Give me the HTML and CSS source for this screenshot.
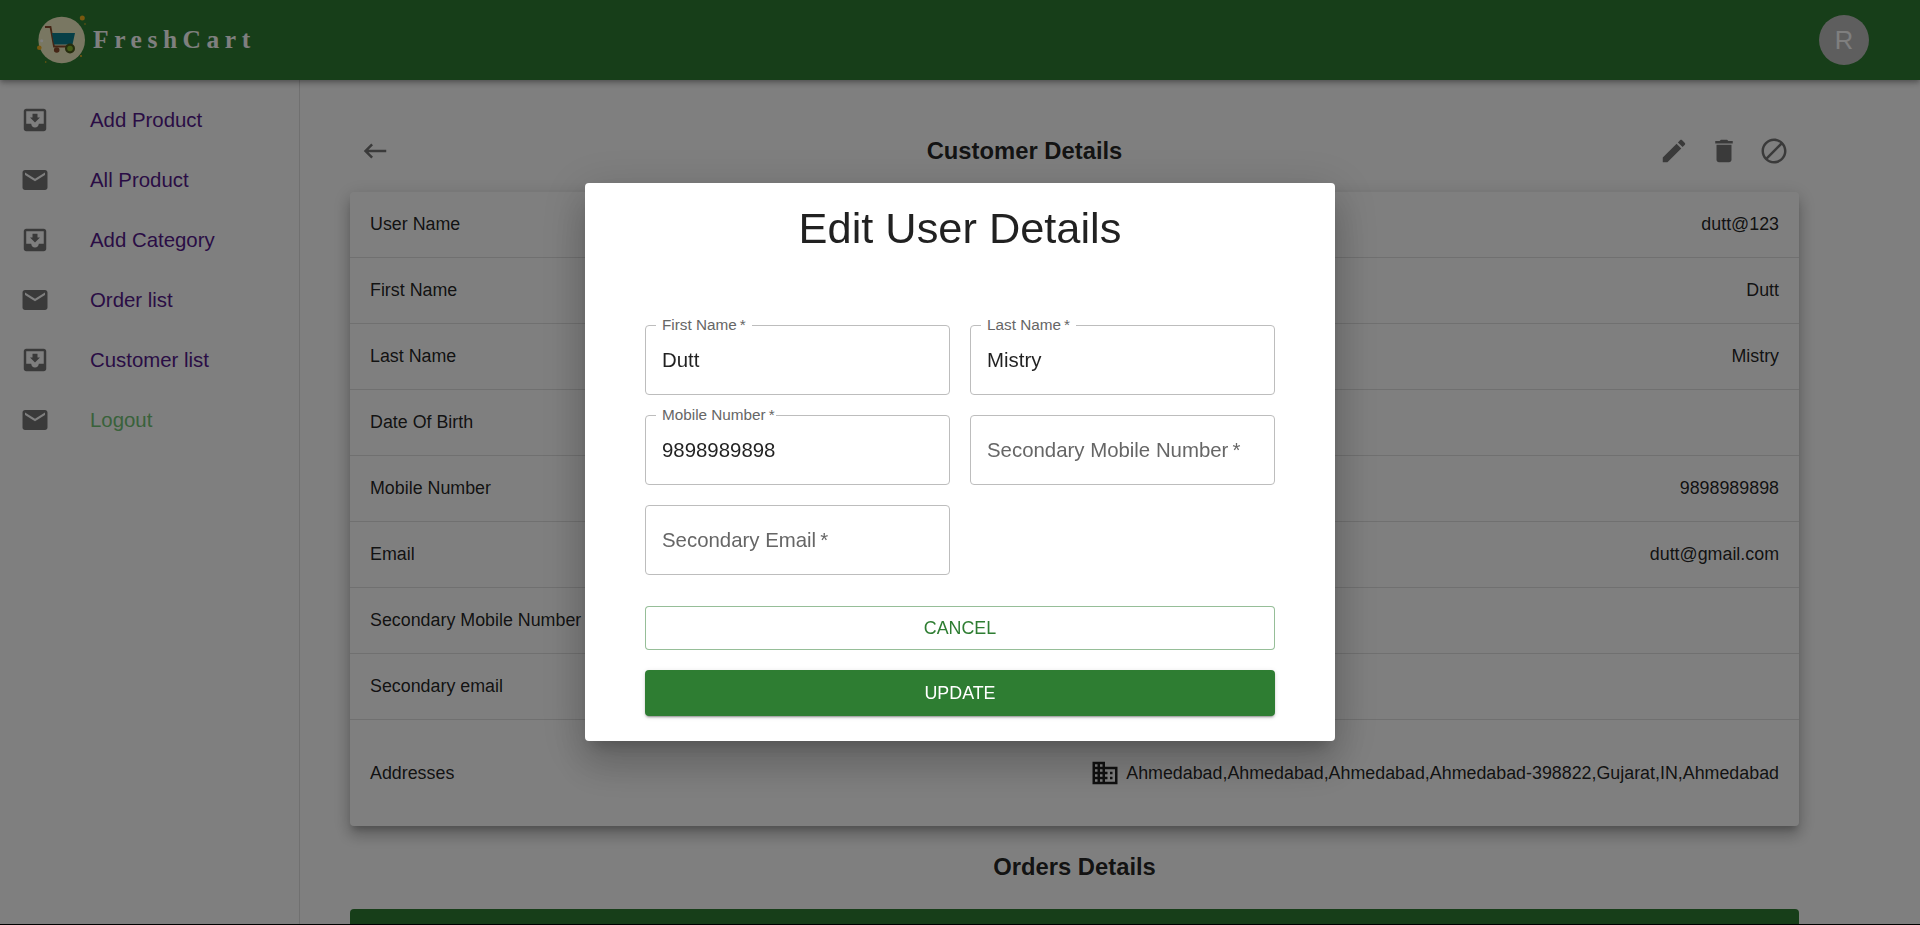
FILE: index.html
```html
<!DOCTYPE html>
<html>
<head>
    <title>FreshCart - Customer Details</title>
    <link rel="stylesheet" href="styles.css">
</head>
<body>
    <header class="topbar">
        <div class="brand">
            <svg class="brand-logo" width="50" height="50" viewBox="0 0 50 50">
                <circle cx="24.7" cy="25" r="23.3" fill="#f3efc4"/>
                <circle cx="45.3" cy="3" r="2.5" fill="#f2b01e"/>
                <circle cx="2.3" cy="32.7" r="2.3" fill="#f2b01e"/>
                <circle cx="4.7" cy="25.7" r="1.5" fill="#fff"/>
                <circle cx="44" cy="41" r="1" fill="#f2b01e"/>
                <circle cx="48" cy="9" r="0.8" fill="#f2b01e"/>
                <circle cx="8.7" cy="47" r="0.8" fill="#f2b01e"/>
                <path d="M8 12h5.5l3.5 19.5h17" fill="none" stroke="#8a4b2a" stroke-width="1.8"/>
                <path d="M15 18h23l-2.5 11.5H17z" fill="#0f7f8f"/>
                <circle cx="19.7" cy="35" r="2.8" fill="#8a4b2a"/>
                <circle cx="33" cy="33.5" r="5" fill="#4b5a1c"/>
                <circle cx="33" cy="33.5" r="2.8" fill="#86b82c"/>
            </svg>
            <span class="brand-name">FreshCart</span>
        </div>
        <div class="avatar">R</div>
    </header>

    <div class="layout">
        <nav class="sidebar">
            <a class="nav-item" href="#">
                <svg class="icon" viewBox="0 0 24 24"><path d="M19 3H4.99c-1.11 0-1.98.9-1.98 2L3 19c0 1.1.88 2 1.99 2H19c1.1 0 2-.9 2-2V5c0-1.1-.9-2-2-2zm0 12h-4c0 1.66-1.35 3-3 3s-3-1.34-3-3H4.99V5H19v10zm-3-5h-2V7h-4v3H8l4 4 4-4z"/></svg>
                <span>Add Product</span>
            </a>
            <a class="nav-item" href="#">
                <svg class="icon" viewBox="0 0 24 24"><path d="M20 4H4c-1.1 0-1.99.9-1.99 2L2 18c0 1.1.9 2 2 2h16c1.1 0 2-.9 2-2V6c0-1.1-.9-2-2-2zm0 4l-8 5-8-5V6l8 5 8-5v2z"/></svg>
                <span>All Product</span>
            </a>
            <a class="nav-item" href="#">
                <svg class="icon" viewBox="0 0 24 24"><path d="M19 3H4.99c-1.11 0-1.98.9-1.98 2L3 19c0 1.1.88 2 1.99 2H19c1.1 0 2-.9 2-2V5c0-1.1-.9-2-2-2zm0 12h-4c0 1.66-1.35 3-3 3s-3-1.34-3-3H4.99V5H19v10zm-3-5h-2V7h-4v3H8l4 4 4-4z"/></svg>
                <span>Add Category</span>
            </a>
            <a class="nav-item" href="#">
                <svg class="icon" viewBox="0 0 24 24"><path d="M20 4H4c-1.1 0-1.99.9-1.99 2L2 18c0 1.1.9 2 2 2h16c1.1 0 2-.9 2-2V6c0-1.1-.9-2-2-2zm0 4l-8 5-8-5V6l8 5 8-5v2z"/></svg>
                <span>Order list</span>
            </a>
            <a class="nav-item" href="#">
                <svg class="icon" viewBox="0 0 24 24"><path d="M19 3H4.99c-1.11 0-1.98.9-1.98 2L3 19c0 1.1.88 2 1.99 2H19c1.1 0 2-.9 2-2V5c0-1.1-.9-2-2-2zm0 12h-4c0 1.66-1.35 3-3 3s-3-1.34-3-3H4.99V5H19v10zm-3-5h-2V7h-4v3H8l4 4 4-4z"/></svg>
                <span>Customer list</span>
            </a>
            <a class="nav-item logout" href="#">
                <svg class="icon" viewBox="0 0 24 24"><path d="M20 4H4c-1.1 0-1.99.9-1.99 2L2 18c0 1.1.9 2 2 2h16c1.1 0 2-.9 2-2V6c0-1.1-.9-2-2-2zm0 4l-8 5-8-5V6l8 5 8-5v2z"/></svg>
                <span>Logout</span>
            </a>
        </nav>

        <main class="content">
            <div class="page-head">
                <button class="icon-btn" type="button">
                    <svg class="icon" viewBox="0 0 24 24"><path d="M21 11H6.83l3.58-3.58L9 6l-6 6 6 6 1.41-1.41L6.83 13H21z"/></svg>
                </button>
                <h2 class="page-title">Customer Details</h2>
                <div class="head-actions">
                    <button class="icon-btn" type="button">
                        <svg class="icon" viewBox="0 0 24 24"><path d="M3 17.25V21h3.75L17.81 9.94l-3.75-3.75L3 17.25zM20.71 7.04c.39-.39.39-1.02 0-1.41l-2.34-2.34c-.39-.39-1.02-.39-1.41 0l-1.83 1.83 3.75 3.75 1.83-1.83z"/></svg>
                    </button>
                    <button class="icon-btn" type="button">
                        <svg class="icon" viewBox="0 0 24 24"><path d="M6 19c0 1.1.9 2 2 2h8c1.1 0 2-.9 2-2V7H6v12zM19 4h-3.5l-1-1h-5l-1 1H5v2h14V4z"/></svg>
                    </button>
                    <button class="icon-btn" type="button">
                        <svg class="icon" viewBox="0 0 24 24"><path d="M12 2C6.48 2 2 6.48 2 12s4.48 10 10 10 10-4.48 10-10S17.52 2 12 2zM4 12c0-4.42 3.58-8 8-8 1.85 0 3.55.63 4.9 1.69L5.69 16.9C4.63 15.55 4 13.85 4 12zm8 8c-1.85 0-3.55-.63-4.9-1.69L18.31 7.1C19.37 8.45 20 10.15 20 12c0 4.42-3.58 8-8 8z"/></svg>
                    </button>
                </div>
            </div>

            <div class="details-card">
                <div class="detail-row"><span>User Name</span><span>dutt@123</span></div>
                <div class="detail-row"><span>First Name</span><span>Dutt</span></div>
                <div class="detail-row"><span>Last Name</span><span>Mistry</span></div>
                <div class="detail-row"><span>Date Of Birth</span><span></span></div>
                <div class="detail-row"><span>Mobile Number</span><span>9898989898</span></div>
                <div class="detail-row"><span>Email</span><span>dutt@gmail.com</span></div>
                <div class="detail-row"><span>Secondary Mobile Number</span><span></span></div>
                <div class="detail-row"><span>Secondary email</span><span></span></div>
                <div class="detail-row address-row">
                    <span>Addresses</span>
                    <span class="address">
                        <svg class="icon building" viewBox="0 0 24 24"><path d="M12 7V3H2v18h20V7H12zM6 19H4v-2h2v2zm0-4H4v-2h2v2zm0-4H4V9h2v2zm0-4H4V5h2v2zm4 12H8v-2h2v2zm0-4H8v-2h2v2zm0-4H8V9h2v2zm0-4H8V5h2v2zm10 12h-8v-2h2v-2h-2v-2h2v-2h-2V9h8v10zm-2-8h-2v2h2v-2zm0 4h-2v2h2v-2z"/></svg>
                        Ahmedabad,Ahmedabad,Ahmedabad,Ahmedabad-398822,Gujarat,IN,Ahmedabad
                    </span>
                </div>
            </div>

            <h2 class="orders-title">Orders Details</h2>
            <div class="orders-head"></div>
        </main>
    </div>

    <div class="backdrop">
        <form class="modal">
            <h1 class="modal-title">Edit User Details</h1>
            <div class="form-grid">
                <div class="field">
                    <label class="field-label">First Name&#8201;*</label>
                    <input type="text" value="Dutt">
                </div>
                <div class="field">
                    <label class="field-label">Last Name&#8201;*</label>
                    <input type="text" value="Mistry">
                </div>
                <div class="field">
                    <label class="field-label tight">Mobile Number&#8201;*</label>
                    <input type="text" value="9898989898">
                </div>
                <div class="field">
                    <input type="text" placeholder="Secondary Mobile Number&#8201;*">
                </div>
                <div class="field">
                    <input type="text" placeholder="Secondary Email&#8201;*">
                </div>
            </div>
            <button class="btn btn-cancel" type="button">CANCEL</button>
            <button class="btn btn-update" type="button">UPDATE</button>
        </form>
    </div>
</body>
</html>
```

FILE: styles.css
```css
* {
    box-sizing: border-box;
}

html {
    background-color: #000;
}

body {
    margin: 0;
    height: 924px;
    overflow: hidden;
    background-color: #fff;
    color: rgba(0, 0, 0, 0.87);
    font-family: "Liberation Sans", Arial, sans-serif;
}

.icon {
    display: block;
    width: 30px;
    height: 30px;
    fill: rgba(0, 0, 0, 0.54);
}

.topbar {
    position: relative;
    z-index: 2;
    display: flex;
    justify-content: space-between;
    align-items: center;
    height: 80px;
    padding: 0 51px 0 37px;
    background-color: #2e7d32;
    box-shadow: 0 2px 4px -1px rgba(0, 0, 0, 0.2), 0 4px 5px 0 rgba(0, 0, 0, 0.14), 0 1px 10px 0 rgba(0, 0, 0, 0.12);
}

.brand {
    display: flex;
    align-items: center;
    gap: 6px;
}

.brand-name {
    color: #fff;
    font-family: "Liberation Serif", "Times New Roman", serif;
    font-size: 25.5px;
    font-weight: bold;
    letter-spacing: 5.55px;
}

.avatar {
    display: flex;
    justify-content: center;
    align-items: center;
    width: 50px;
    height: 50px;
    border-radius: 50%;
    background-color: #bdbdbd;
    color: #fff;
    font-size: 25.5px;
}

.layout {
    display: flex;
    height: 844px;
}

.sidebar {
    flex: 0 0 300px;
    padding-top: 10px;
    border-right: 1px solid rgba(0, 0, 0, 0.12);
}

.nav-item {
    display: flex;
    align-items: center;
    gap: 40px;
    height: 60px;
    padding-left: 20px;
    color: #551a8b;
    font-size: 20.4px;
    text-decoration: none;
}

.logout {
    color: #72c476;
}

.content {
    flex: 1;
    padding: 46px 121px 0 50px;
}

.page-head {
    display: flex;
    justify-content: space-between;
    align-items: center;
    margin-bottom: 16px;
}

.icon-btn {
    display: block;
    width: 50px;
    height: 50px;
    padding: 10px;
    border: none;
    background: none;
}

.page-title {
    margin: 0;
    font-size: 23.8px;
    font-weight: bold;
}

.head-actions {
    display: flex;
}

.details-card {
    border-radius: 4px;
    background-color: #fff;
    box-shadow: 0 6px 6px -3px rgba(0, 0, 0, 0.2), 0 10px 14px 1px rgba(0, 0, 0, 0.14), 0 4px 18px 3px rgba(0, 0, 0, 0.12);
}

.detail-row {
    display: flex;
    justify-content: space-between;
    align-items: center;
    height: 66px;
    padding: 0 20px;
    border-bottom: 1px solid #e0e0e0;
    font-size: 17.85px;
}

.address-row {
    height: 106px;
    border-bottom: none;
}

.address {
    display: flex;
    align-items: center;
    gap: 6px;
}

.building {
    fill: rgba(0, 0, 0, 0.87);
}

.orders-title {
    margin: 28px 0 29px;
    font-size: 23.8px;
    font-weight: bold;
    line-height: 26px;
    text-align: center;
}

.orders-head {
    height: 40px;
    border-radius: 4px 4px 0 0;
    background-color: #2e7d32;
}

/* dialog */
.backdrop {
    position: fixed;
    top: 0;
    left: 0;
    z-index: 10;
    display: flex;
    justify-content: center;
    align-items: center;
    width: 100%;
    height: 100%;
    padding-bottom: 1px;
    background-color: rgba(0, 0, 0, 0.5);
}

.modal {
    width: 750px;
    height: 558px;
    padding: 0 60px;
    border-radius: 4px;
    background-color: #fff;
    box-shadow: 0 11px 15px -7px rgba(0, 0, 0, 0.2), 0 24px 38px 3px rgba(0, 0, 0, 0.14), 0 9px 46px 8px rgba(0, 0, 0, 0.12);
}

.modal-title {
    margin: 0;
    padding-top: 20px;
    font-size: 43.35px;
    font-weight: normal;
    line-height: 50px;
    text-align: center;
}

.form-grid {
    display: grid;
    grid-template-columns: 305px 305px;
    gap: 20px;
    margin-top: 72px;
}

.field {
    position: relative;
    height: 70px;
    border: 1px solid #bdbdbd;
    border-radius: 4px;
}

.field input {
    display: block;
    width: 100%;
    height: 100%;
    padding: 0 16px;
    border: none;
    border-radius: 4px;
    outline: none;
    background: none;
    color: rgba(0, 0, 0, 0.87);
    font-family: inherit;
    font-size: 20.4px;
}

.field input::placeholder {
    color: #666;
    opacity: 1;
}

.field-label {
    position: absolute;
    top: -10px;
    left: 10px;
    padding: 0 6px;
    background-color: #fff;
    color: #666;
    font-size: 15.3px;
    line-height: 17px;
}

.field-label.tight {
    padding-right: 1px;
}

.btn {
    display: block;
    width: 100%;
    border-radius: 4px;
    font-family: inherit;
    font-size: 17.85px;
}

.btn-cancel {
    height: 44px;
    margin-top: 31px;
    border: 1px solid rgba(46, 125, 50, 0.5);
    background-color: #fff;
    color: #2e7d32;
}

.btn-update {
    height: 46px;
    margin-top: 20px;
    border: none;
    background-color: #2e7d32;
    color: #fff;
    box-shadow: 0 3px 1px -2px rgba(0, 0, 0, 0.2), 0 2px 2px 0 rgba(0, 0, 0, 0.14), 0 1px 5px 0 rgba(0, 0, 0, 0.12);
}
```
